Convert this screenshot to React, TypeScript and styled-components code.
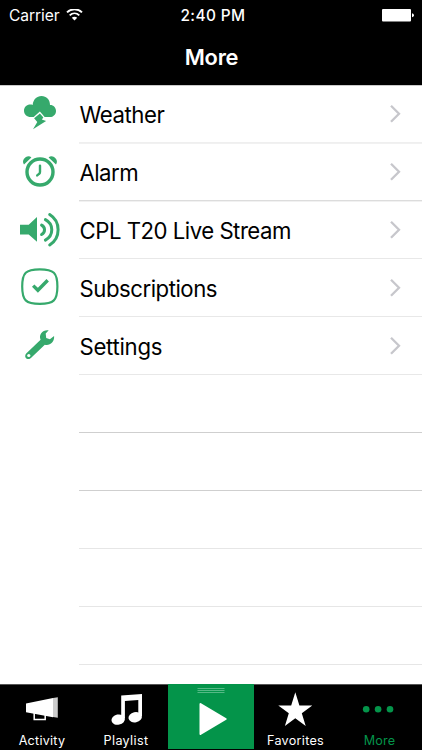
import React from 'react';
import styled, { createGlobalStyle } from 'styled-components';

const Global = createGlobalStyle`
  * { box-sizing: border-box; }
  body { margin: 0; background: #fff; overflow: hidden; font-family: Inter, Roboto, sans-serif; }
  svg { display: block; flex: none; }
`;
const Screen = styled.div`
  width: 422px; height: 750px; display: flex; flex-direction: column; background: #fff;
`;
const Header = styled.header`
  height: 85px; flex: none; background: #000; color: #fff;
`;
const StatusBar = styled.div`
  height: 30px; display: grid; grid-template-columns: 1fr auto 1fr; align-items: center; padding: 0 8px 0 9px;
`;
const Carrier = styled.div`
  display: flex; align-items: center; gap: 7px; font-size: 15.6px; letter-spacing: -0.1px; line-height: 30px;
`;
const Clock = styled.div`
  font-size: 15.4px; font-weight: 500; letter-spacing: 0.4px; line-height: 30px; padding: 1px 0 0 3px;
`;
const Battery = styled.svg`justify-self: end;`;
const Title = styled.h1`
  margin: 0; height: 54px; line-height: 54px; text-align: center; font-size: 21.8px; font-weight: 600; letter-spacing: -0.25px; padding-left: 1px;
`;
const List = styled.main`
  flex: 1; min-height: 0; overflow: hidden; box-shadow: inset 0 1px #cbcbcb;
`;
const Row = styled.div`
  height: 58px; display: flex;
`;
const IconCell = styled.div`
  width: 79px; flex: none; color: #36a96c;
`;
const Cell = styled.div<{ $line: string; $soft?: boolean }>`
  flex: 1; display: flex; align-items: center; justify-content: space-between; padding: 1px 21px 0 1px;
  border-bottom: 1px solid ${p => p.$line};
  box-shadow: ${p => (p.$soft ? '0 1px #f1f1f1' : 'none')};
`;
const Label = styled.span<{ $spacing: number }>`
  font-size: 22.2px; line-height: 30px; color: #000; letter-spacing: ${p => p.$spacing}px; white-space: nowrap;
  margin-left: -0.5px; padding-top: 1px;
`;
const TabBar = styled.nav`
  height: 66px; flex: none; display: grid; grid-template-columns: 84px 84px 86px 83px 85px; background: #000; border-top: 1px solid #555;
`;
const Tab = styled.div<{ $active?: boolean }>`
  display: flex; flex-direction: column; align-items: center; color: ${p => (p.$active ? '#04944a' : '#fff')};
`;
const TabLabel = styled.span<{ $spacing: number }>`
  font-size: 12.6px; line-height: 16px; margin-top: 1px; letter-spacing: ${p => p.$spacing}px; white-space: nowrap;
`;
const PlayTab = styled.div`
  background: #04944a; height: 65px; margin-top: -1px;
`;

const WeatherIcon = () => (
  <svg width="60" height="58" fill="currentColor">
    <path d="M30.8 32C26.8 32 24 29.2 24 25.7c0-3.6 2.8-6.1 6.3-6.1.9 0 1.7.1 2.4.4C33 14.8 36.7 11 41.5 11c5 0 8.5 3.8 8.5 8.9 3.5-.1 6 2.6 6 6 0 3.5-2.7 6.1-6.1 6.1Z" />
    <path d="m32.6 32.9 7.3-6.3 5.4 6.2Z" fill="#fff" />
    <path d="m34.1 33.2 5.8-4.7 3.5 4-1.6 2 4.3 1.6L33 44.3l4.3-7.2Z" />
  </svg>
);
const AlarmIcon = () => (
  <svg width="60" height="58" fill="none" stroke="currentColor">
    <circle cx="40" cy="29" r="13" strokeWidth="3.4" />
    <path d="M40 22.6v6.4q0 1.2-1 1.9l-1.8 1.5" strokeWidth="2.4" strokeLinecap="round" />
    <path d="M24 21.4c-3.4-4.4 3.3-10.6 7.4-7Z M56 21.4c3.4-4.4-3.3-10.6-7.4-7Z" fill="currentColor" stroke="none" />
  </svg>
);
const SpeakerIcon = () => (
  <svg width="62" height="58" fill="none" stroke="currentColor">
    <path d="M20 23.7h8.7l8.3-7.6v24.7l-8.3-7.4H20Z" fill="currentColor" stroke="none" />
    <path d="M41.6 24.1c3.9 2 3.9 7.4 0 9.4 M45.4 18.6c8.5 4.4 8.5 16 0 20.5 M49.7 13.5c11.2 7 11.2 23.4 0 30.4" strokeWidth="3" strokeLinecap="round" />
  </svg>
);
const CheckIcon = () => (
  <svg width="60" height="58" fill="none" stroke="currentColor">
    <path d="M39.8 10.3c14 0 17.6 3.6 17.6 17.3S53.8 44.9 39.8 44.9 22.2 41.3 22.2 27.6 25.8 10.3 39.8 10.3Z" strokeWidth="2.2" />
    <path d="m33.2 26.6 4.7 4.7 9.8-10" strokeWidth="3.4" />
  </svg>
);
const WrenchIcon = () => (
  <svg width="60" height="58" fill="currentColor">
    <path d="M48.7 13.3c-6-.9-10.3 4.4-8.1 9.4L26.2 36.4c-3.2 4.2 2.1 7.7 5 4.4l13.6-13.1c4.8 1.3 9.8-2.4 9.3-8.7l-4.2 3.3-3.7-1.4-.5-4.3Z" />
    <circle cx="28.8" cy="38.5" r="1.6" fill="#fff" />
  </svg>
);
const Chevron = () => (
  <svg width="12" height="20" viewBox="0 0 12 20"><path d="m2 1.8 8 8-8 8" fill="none" stroke="#c7c7cc" strokeWidth="2.3" /></svg>
);

const rows = [
  { label: 'Weather', Icon: WeatherIcon, spacing: -0.45, line: '#efefef', soft: true },
  { label: 'Alarm', Icon: AlarmIcon, spacing: -0.55, line: '#dcdcdc', soft: true },
  { label: 'CPL T20 Live Stream', Icon: SpeakerIcon, spacing: -0.5, line: '#e8e8e8' },
  { label: 'Subscriptions', Icon: CheckIcon, spacing: -0.48, line: '#e8e8e8' },
  { label: 'Settings', Icon: WrenchIcon, spacing: -0.28, line: '#e8e8e8' },
];
const emptyRows = ['#cfcfcf', '#cfcfcf', '#e6e6e6', '#e6e6e6', '#e6e6e6'];

export default function App() {
  return (
    <>
      <Global />
      <Screen>
        <Header>
          <StatusBar>
            <Carrier>
              Carrier
              <svg width="17" height="13" viewBox="0 0 17 13" fill="none" stroke="#fff" strokeWidth="1.9">
                <path d="M1 3.4c4.2-4.1 10.8-4.1 15 0 M3.7 6.4c2.8-2.7 6.8-2.7 9.6 0" />
                <path d="M8.5 11.4 5.8 8.7c1.5-1.4 3.9-1.4 5.4 0Z" fill="#fff" stroke="none" />
              </svg>
            </Carrier>
            <Clock>2:40 PM</Clock>
            <Battery width="32" height="13">
              <rect x="0" y="0" width="29" height="12.4" rx="1" fill="#fff" />
              <path d="M30 4.3q2 .3 2 2t-2 2Z" fill="#fff" />
            </Battery>
          </StatusBar>
          <Title>More</Title>
        </Header>
        <List>
          {rows.map(({ label, Icon, spacing, line, soft }) => (
            <Row key={label}>
              <IconCell><Icon /></IconCell>
              <Cell $line={line} $soft={soft}><Label $spacing={spacing}>{label}</Label><Chevron /></Cell>
            </Row>
          ))}
          {emptyRows.map((line, i) => (
            <Row key={i}><IconCell /><Cell $line={line} /></Row>
          ))}
        </List>
        <TabBar>
          <Tab>
            <svg width="84" height="47" fill="#fff">
              <path d="M26 18.5 53 13v19.2L26 27.3Z" />
              <path d="M53 13 57.8 12.2v20.6L53 32Z" fill="#ccc" />
              <path d="M34.2 28v6.6h11V30" fill="none" stroke="#fff" strokeWidth="1.5" />
            </svg>
            <TabLabel $spacing={0.25}>Activity</TabLabel>
          </Tab>
          <Tab>
            <svg width="84" height="47" fill="#fff">
              <path d="M37.2 10.4 58 9v22h-3.7V15l-13.4 1v17h-3.7Z" />
              <ellipse cx="34.2" cy="34.6" rx="6.8" ry="5.1" transform="rotate(-12 34.2 34.6)" />
              <ellipse cx="51.2" cy="32.2" rx="6.8" ry="5.1" transform="rotate(-12 51.2 32.2)" />
            </svg>
            <TabLabel $spacing={0.35}>Playlist</TabLabel>
          </Tab>
          <PlayTab>
            <svg width="86" height="65">
              <path d="M29.5 4.5h27 M29.5 6.5h27 M29.5 8.5h27" stroke="#55b985" />
              <path d="m32.5 20 25.2 15-25.2 15Z" fill="#fff" stroke="#fff" strokeWidth="2" strokeLinejoin="round" />
            </svg>
          </PlayTab>
          <Tab>
            <svg width="83" height="47" fill="#fff">
              <path d="m41.3 7.2 4.1 13.2H58.3L47.8 28.3 51.7 41 41.3 33.3 30.9 41l3.9-12.7L24.3 20.4h12.9Z" />
            </svg>
            <TabLabel $spacing={0.3}>Favorites</TabLabel>
          </Tab>
          <Tab $active>
            <svg width="85" height="47" fill="currentColor">
              <circle cx="29.2" cy="24.3" r="3.3" /><circle cx="41.1" cy="24.3" r="3.3" /><circle cx="53" cy="24.3" r="3.3" />
            </svg>
            <TabLabel $spacing={0.2}>More</TabLabel>
          </Tab>
        </TabBar>
      </Screen>
    </>
  );
}
